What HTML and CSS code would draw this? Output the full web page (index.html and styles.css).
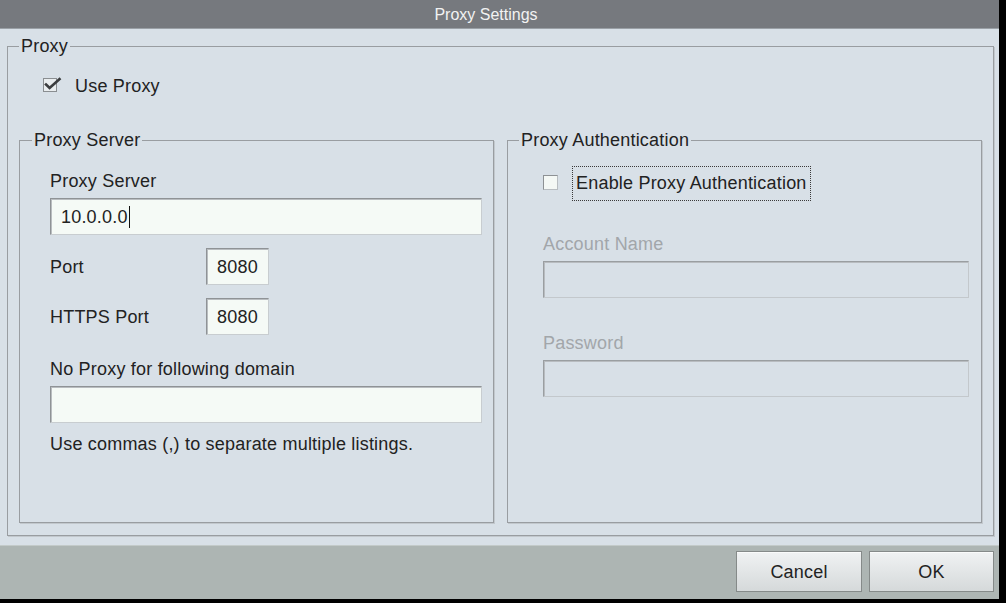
FILE: index.html
```html
<!DOCTYPE html>
<html>
<head>
<meta charset="utf-8">
<title>Proxy Settings</title>
<link rel="stylesheet" href="styles.css">
</head>
<body>
<div class="dialog">
  <div class="titlebar">Proxy Settings</div>
  <div class="content">
    <div class="group outer">
      <span class="legend">Proxy</span>
      <div class="use-row">
        <svg class="chk-on" width="20" height="16" viewBox="0 0 20 16">
          <rect x="0.5" y="2.5" width="13" height="13" fill="#e9edef" stroke="#8a8e91"/>
          <path d="M3 8.5 L6.6 12 L16.5 3.2" fill="none" stroke="#3b3d3f" stroke-width="2.6" stroke-linecap="square"/>
        </svg>
        <span class="use-label">Use Proxy</span>
      </div>
      <div class="groups">
        <div class="group inner left">
          <span class="legend">Proxy Server</span>
          <div class="label">Proxy Server</div>
          <div class="field wide"><span>10.0.0.0</span><span class="caret"></span></div>
          <div class="port-row first">
            <div class="port-label">Port</div>
            <div class="field port">8080</div>
          </div>
          <div class="port-row">
            <div class="port-label">HTTPS Port</div>
            <div class="field port">8080</div>
          </div>
          <div class="label np">No Proxy for following domain</div>
          <div class="field wide"></div>
          <div class="hint">Use commas (,) to separate multiple listings.</div>
        </div>
        <div class="group inner right">
          <span class="legend">Proxy Authentication</span>
          <div class="enable-row">
            <span class="chk-off"></span>
            <span class="focus">Enable Proxy Authentication</span>
          </div>
          <div class="label dis acct">Account Name</div>
          <div class="field disabled"></div>
          <div class="label dis pw">Password</div>
          <div class="field disabled"></div>
        </div>
      </div>
    </div>
  </div>
  <div class="footer">
    <div class="btn cancel">Cancel</div>
    <div class="btn ok">OK</div>
  </div>
</div>
</body>
</html>
```

FILE: styles.css
```css
html, body {
  margin: 0;
  padding: 0;
  background: #000;
}
body {
  font-family: "Liberation Sans", Arial, sans-serif;
  font-size: 18px;
  letter-spacing: 0.2px;
  color: #222;
}
.dialog {
  width: 999px;
  height: 599px;
  display: flex;
  flex-direction: column;
}
.titlebar {
  height: 29px;
  line-height: 29px;
  background: #76797e;
  color: #f2f2f2;
  font-size: 16px;
  letter-spacing: 0;
  text-align: center;
  padding-right: 27px;
  border-bottom: 1px solid #9aa0a6;
  box-sizing: border-box;
}
.content {
  height: 516px;
  background: #d8e0e7;
  padding-top: 17px;
  box-sizing: border-box;
}
.group {
  position: relative;
  box-sizing: border-box;
  border: 1px solid #999da1;
  box-shadow: 1px 1px 0 #c2c8cd;
}
.legend {
  position: absolute;
  top: -11px;
  left: 11px;
  padding: 0 2px;
  line-height: 20px;
  background: #d8e0e7;
  white-space: nowrap;
}
.outer {
  width: 987px;
  height: 490px;
  margin-left: 7px;
  padding: 29px 11px 12px 11px;
  display: flex;
  flex-direction: column;
}
.use-row {
  height: 20px;
  display: flex;
  align-items: center;
  padding-left: 24px;
}
.chk-on {
  display: block;
  margin-top: -4px;
}
.use-label {
  margin-left: 12px;
  line-height: 20px;
}
.groups {
  margin-top: 44px;
  flex: 1;
  display: flex;
  gap: 13px;
}
.inner {
  width: 475px;
  height: 100%;
}
.inner .legend {
  left: 12px;
}
.inner.right .legend {
  left: 11px;
}
.left {
  padding: 30px 11px 0 30px;
}
.right {
  padding: 25px 12px 0 35px;
}
.label {
  line-height: 20px;
  white-space: nowrap;
}
.field {
  box-sizing: border-box;
  height: 37px;
  background: #f5faf6;
  border: 1px solid;
  border-color: #8f9396 #c8cdd0 #c8cdd0 #8f9396;
  box-shadow: inset 1px 1px 0 #b9bdc0;
  padding-left: 10px;
  display: flex;
  align-items: center;
  line-height: 20px;
}
.wide {
  margin-top: 7px;
  width: 432px;
}
.caret {
  display: inline-block;
  width: 1px;
  height: 22px;
  background: #111;
  margin-left: 1px;
}
.port-row {
  display: flex;
  align-items: center;
  margin-top: 13px;
}
.port-label {
  width: 156px;
  line-height: 20px;
}
.port {
  width: 63px;
}
.np {
  margin-top: 24px;
}
.hint {
  margin-top: 11px;
  line-height: 20px;
  white-space: nowrap;
}
.enable-row {
  height: 35px;
  display: flex;
  align-items: center;
}
.chk-off {
  width: 15px;
  height: 15px;
  box-sizing: border-box;
  background: #f4f8f5;
  border: 1px solid;
  border-color: #8d9194 #b8bdc1 #b8bdc1 #8d9194;
  margin-top: -3px;
}
.focus {
  margin-left: 14px;
  height: 35px;
  box-sizing: border-box;
  border: 1px dotted #3a3a3a;
  padding: 0 3px 0 3px;
  line-height: 33px;
  white-space: nowrap;
}
.dis {
  color: #a2a6aa;
}
.acct {
  margin-top: 33px;
}
.pw {
  margin-top: 35px;
}
.disabled {
  margin-top: 7px;
  width: 426px;
  background: #d8e0e7;
  border-color: #9a9ea1 #c3c8cc #c3c8cc #9a9ea1;
  box-shadow: inset 1px 1px 0 #b8bcc0;
}
.footer {
  height: 54px;
  background: #adb5b3;
  border-top: 1px solid #c3cac9;
  box-sizing: border-box;
  display: flex;
  justify-content: flex-end;
  align-items: flex-start;
  gap: 7px;
  padding: 5px 5px 0 0;
}
.btn {
  height: 41px;
  box-sizing: border-box;
  border: 1px solid #858a89;
  background: linear-gradient(#f0f2f3, #d5d9da);
  box-shadow: inset 0 1px 0 #fafbfb;
  display: flex;
  align-items: center;
  justify-content: center;
  line-height: 20px;
  color: #222;
}
.cancel {
  width: 126px;
}
.ok {
  width: 125px;
}
```
